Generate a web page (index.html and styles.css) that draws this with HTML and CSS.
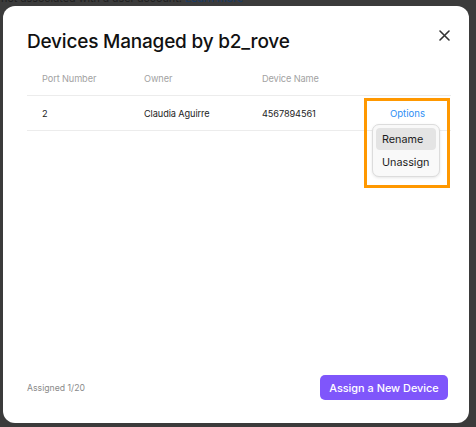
FILE: index.html
```html
<!DOCTYPE html>
<html>
<head>
<meta charset="utf-8">
<link rel="stylesheet" href="styles.css">
</head>
<body>
<div class="page">
  <p class="page-text">not associated with a user account. <span class="page-link">Learn more</span></p>
</div>
<div class="modal">
  <div class="modal-head">
    <h1 class="title">Devices Managed by b2_rove</h1>
    <button class="close" aria-label="Close">
      <svg width="11" height="11" viewBox="0 0 11 11"><path d="M1 1L10 10M10 1L1 10" stroke="#333" stroke-width="1.6" stroke-linecap="round"/></svg>
    </button>
  </div>
  <div class="table">
    <div class="row head-row">
      <div class="cell">Port Number</div>
      <div class="cell">Owner</div>
      <div class="cell">Device Name</div>
      <div class="cell"></div>
    </div>
    <div class="row body-row">
      <div class="cell">2</div>
      <div class="cell">Claudia Aguirre</div>
      <div class="cell">4567894561</div>
      <div class="cell options-cell"><span class="options">Options</span></div>
    </div>
  </div>
  <div class="footer">
    <span class="assigned">Assigned 1/20</span>
    <button class="assign-btn">Assign a New Device</button>
  </div>
  <div class="highlight-box"></div>
  <div class="menu">
    <div class="menu-item active">Rename</div>
    <div class="menu-item">Unassign</div>
  </div>
</div>
</body>
</html>
```
FILE: styles.css
```css
html, body {
  margin: 0;
  padding: 0;
}
body {
  width: 476px;
  height: 427px;
  background: #3b3b3b;
  font-family: Inter, "Noto Sans", sans-serif;
  overflow: hidden;
  position: relative;
}
.page {
  padding-left: 1px;
}
.page-text {
  margin: -7px 0 0;
  font-size: 10.8px;
  line-height: 12px;
  color: #202020;
}
.page-link {
  color: #163a66;
}
.modal {
  position: absolute;
  left: 3px;
  top: 6px;
  width: 466px;
  height: 417px;
  background: #fff;
  border-radius: 12px;
  box-sizing: border-box;
  padding: 24px 18px 23px 24px;
  display: flex;
  flex-direction: column;
}
.modal-head {
  display: flex;
  justify-content: space-between;
  align-items: flex-start;
}
.title {
  margin: 0;
  font-size: 19px;
  line-height: 24px;
  font-weight: 500;
  color: #111;
  letter-spacing: -0.2px;
}
.close {
  border: 0;
  background: none;
  padding: 0;
  margin: 0 1px 0 0;
  width: 11px;
  height: 11px;
  display: flex;
}
.table {
  margin-top: 8px;
}
.row {
  display: grid;
  grid-template-columns: 102px 118px 117px 87px;
  align-items: center;
}
.head-row {
  height: 33px;
  border-bottom: 1px solid #ececec;
}
.body-row {
  height: 34px;
  border-bottom: 1px solid #ececec;
}
.cell {
  padding-left: 15px;
  font-size: 9.2px;
  letter-spacing: -0.1px;
  color: #222;
}
.head-row .cell {
  color: #a2a2a2;
}
.options-cell {
  padding-left: 0;
  text-align: center;
}
.options {
  color: #2f8ff5;
  font-size: 9.6px;
  letter-spacing: 0;
}
.footer {
  margin-top: auto;
  display: flex;
  justify-content: space-between;
  align-items: center;
}
.assigned {
  font-size: 8.7px;
  color: #8a8a8a;
}
.assign-btn {
  border: 0;
  margin: 0 3px 0 0;
  width: 128px;
  height: 25px;
  border-radius: 5px;
  background: #7f56fb;
  color: #fff;
  font-family: Inter, "Noto Sans", sans-serif;
  font-size: 10.9px;
  font-weight: 500;
  padding: 0;
}
.highlight-box {
  position: absolute;
  left: 361px;
  top: 92px;
  width: 86px;
  height: 90px;
  box-sizing: border-box;
  border: 3px solid #ff9800;
}
.menu {
  position: absolute;
  left: 369px;
  top: 118px;
  width: 68px;
  height: 53px;
  box-sizing: border-box;
  background: #f9f9f9;
  border: 1px solid #dcdcdc;
  border-radius: 7px;
  box-shadow: 0 1px 3px rgba(0,0,0,0.1);
  padding: 3px;
  display: flex;
  flex-direction: column;
  gap: 1px;
}
.menu-item {
  height: 22px;
  line-height: 24px;
  padding-left: 6px;
  font-size: 10.8px;
  color: #1c1c1c;
  border-radius: 4px;
}
.menu-item.active {
  background: #e4e4e4;
}
```
